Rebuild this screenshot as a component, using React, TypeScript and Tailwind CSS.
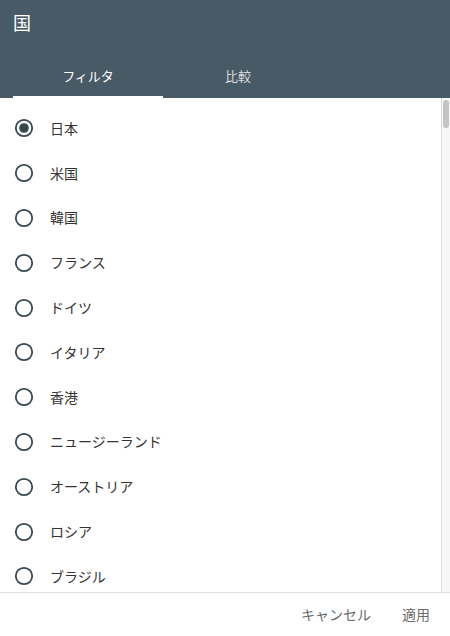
const countries = [
  "日本",
  "米国",
  "韓国",
  "フランス",
  "ドイツ",
  "イタリア",
  "香港",
  "ニュージーランド",
  "オーストリア",
  "ロシア",
  "ブラジル",
];

function Radio({ checked }: { checked: boolean }) {
  return (
    <svg width="20" height="20" viewBox="0 0 20 20" className="shrink-0">
      <circle cx="10" cy="10" r="8.2" fill="none" stroke="#37474f" strokeWidth="1.8" />
      {checked && <circle cx="10" cy="10" r="4.8" fill="#37474f" />}
    </svg>
  );
}

export default function App() {
  const font = { fontFamily: '"Noto Sans CJK JP", "Noto Sans", sans-serif' };
  return (
    <div className="w-[450px] h-[636px] flex flex-col bg-white overflow-hidden" style={font}>
      <div className="bg-[#475a65] h-[98px] flex flex-col shrink-0">
        <div className="h-[54px] px-[13px] flex items-start pt-[11px]">
          <h1 className="text-[18px] leading-[22px] text-white">国</h1>
        </div>
        <div className="flex h-[44px] px-[13px]">
          <button className="w-[150px] flex flex-col items-center text-[13px] text-white">
            <span className="flex-1 flex items-center pt-[1px]">フィルタ</span>
            <span className="h-[2px] w-full bg-white" />
          </button>
          <button className="w-[150px] flex flex-col items-center text-[13px] text-[#d5dbdf]">
            <span className="flex-1 flex items-center pt-[1px]">比較</span>
            <span className="h-[2px] w-full" />
          </button>
        </div>
      </div>

      <div className="flex-1 flex min-h-0">
        <ul className="flex-1 pt-[8px] overflow-hidden">
          {countries.map((c, i) => (
            <li key={c} className="h-[44.8px] flex items-center pl-[14px] gap-[16px]">
              <Radio checked={i === 0} />
              <span className="text-[14px] text-[#333333]">{c}</span>
            </li>
          ))}
        </ul>
        <div className="w-[9px] border-l border-[#dcdcdc] bg-[#f7f7f7] pt-[2px] flex justify-center">
          <div className="w-[6px] h-[28px] rounded-[3px] bg-[#c4c4c4]" />
        </div>
      </div>

      <div className="h-[44px] shrink-0 border-t border-[#e0e0e0] flex items-center justify-end gap-[31px] pr-[20px]">
        <button className="text-[14px] text-[#6b6b6b]">キャンセル</button>
        <button className="text-[14px] text-[#6b6b6b]">適用</button>
      </div>
    </div>
  );
}
